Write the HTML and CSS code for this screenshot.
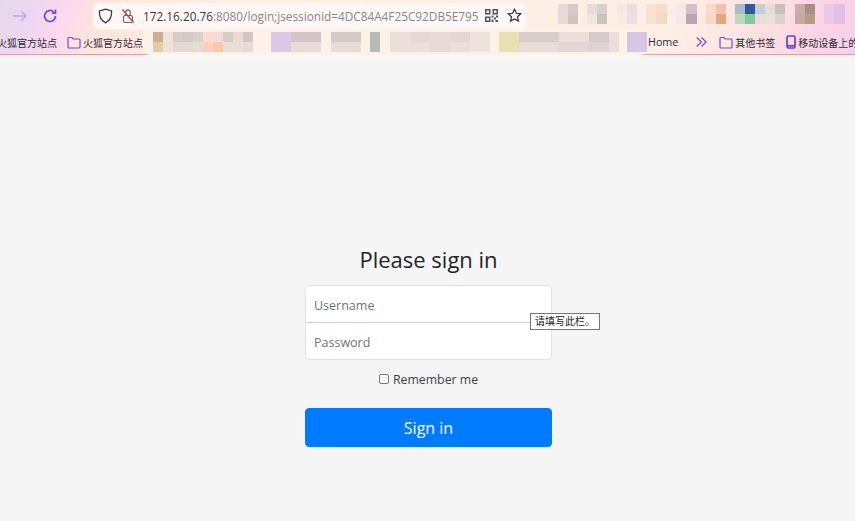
FILE: index.html
```html
<!DOCTYPE html>
<html lang="en">
<head>
    <meta charset="UTF-8">
    <meta name="viewport" content="width=device-width, initial-scale=1.0">
    <title>Please sign in</title>
    <link rel="stylesheet" href="styles.css">
</head>
<body>
    <header class="browser">
        <div class="toolbar">
            <svg class="icon nav-forward" width="18" height="18" viewBox="0 0 18 18" fill="none" stroke="#b9a2ee" stroke-width="1.3"><path d="M2 9h13M10 4l5 5-5 5"/></svg>
            <svg class="icon nav-reload" width="16" height="16" viewBox="0 0 16 16" fill="none" stroke="#7044dc" stroke-width="1.7"><path d="M13.5 8a5.5 5.5 0 1 1-1.7-4"/><path d="M13.5 1.5v3.7H9.8"/></svg>
            <div class="address">
                <svg class="icon" width="15" height="16" viewBox="0 0 15 16" fill="none" stroke="#3a3a44" stroke-width="1.3"><path d="M7.5 1.2 13.6 3c.3 5.500-1.700 9.500-6.100 11.800C3.100 12.500 1.100 8.500 1.400 3z"/></svg>
                <svg class="icon lock" width="14" height="16" viewBox="0 0 14 16" fill="none" stroke="#6a6570" stroke-width="1.200"><rect x="2.500" y="7.500" width="9" height="7" rx="1.500"/><path d="M4.800 7.500V4a2.200 2.200 0 0 1 4.400 0v3.500"/><path d="M1.500 1.500 12.500 14.500" stroke="#e0304a"/></svg>
                <span class="url"><b>172.16.20.76</b>:8080/login;jsessionid=4DC84A4F25C92DB5E795</span>
                <svg class="icon qr" width="13" height="13" viewBox="0 0 13 13" fill="#55505e"><path d="M0 0h5.500v5.500H0zM1.500 1.500V4H4V1.500zM7.500 0H13v5.500H7.500zM9 1.500V4h2.500V1.500zM0 7.500h5.500V13H0zM1.500 9v2.500H4V9zM6.500 6.500h2v2h-2zM9 8.500h2v2H9zM11 6.500h2v2h-2zM6.500 10.500h2V13h-2zM10.500 11h2.500v2h-2.500z"/></svg>
                <svg class="icon" width="15" height="15" viewBox="0 0 15 15" fill="none" stroke="#33303a" stroke-width="1.200"><path d="m7.500 1.300 1.900 4 4.300.5-3.200 3 .9 4.300-3.900-2.200-3.900 2.200.9-4.300-3.200-3 4.300-.5z"/></svg>
            </div>
        </div>
        <svg class="mosaic mosaic-top" width="287" height="21" viewBox="0 0 287 21">
            <rect x="0" y="0" width="10" height="10" fill="#e8d8d6"/><rect x="10" y="0" width="10" height="10" fill="#d9c8c8"/><rect x="0" y="10" width="10" height="10" fill="#e6dad4"/><rect x="10" y="10" width="10" height="10" fill="#cfc6c0"/>
            <rect x="29" y="0" width="10" height="10" fill="#e8dcd8"/><rect x="39" y="0" width="10" height="10" fill="#d9d0cc"/><rect x="29" y="10" width="10" height="10" fill="#f0e6dc"/><rect x="39" y="10" width="10" height="10" fill="#c9c3be"/>
            <rect x="59" y="0" width="10" height="10" fill="#f8e8e4"/><rect x="69" y="0" width="10" height="10" fill="#eedde0"/><rect x="59" y="10" width="10" height="10" fill="#f9ebe0"/><rect x="69" y="10" width="10" height="10" fill="#eedde2"/>
            <rect x="88" y="0" width="10" height="10" fill="#f8e2d4"/><rect x="98" y="0" width="11" height="10" fill="#fadcc4"/><rect x="88" y="10" width="10" height="10" fill="#f6e4d2"/><rect x="98" y="10" width="11" height="10" fill="#eedcc8"/>
            <rect x="118" y="0" width="10" height="10" fill="#f2e8e4"/><rect x="128" y="0" width="11" height="10" fill="#d3c0c4"/><rect x="118" y="10" width="10" height="10" fill="#f3e9e3"/><rect x="128" y="10" width="11" height="10" fill="#b9a6b4"/>
            <rect x="148" y="0" width="10" height="10" fill="#fbd9cc"/><rect x="158" y="0" width="10" height="10" fill="#f2c3a8"/><rect x="148" y="10" width="10" height="10" fill="#f6d8c6"/><rect x="158" y="10" width="10" height="10" fill="#e5a67a"/>
            <rect x="177" y="0" width="10" height="10" fill="#aab8d0"/><rect x="187" y="0" width="10" height="10" fill="#2d5b9a"/><rect x="197" y="0" width="10" height="10" fill="#c8cddd"/><rect x="207" y="0" width="10" height="10" fill="#e6dcd6"/><rect x="217" y="0" width="10" height="10" fill="#c9c0bc"/>
            <rect x="177" y="10" width="10" height="10" fill="#bcd8bf"/><rect x="187" y="10" width="10" height="10" fill="#86c79e"/><rect x="197" y="10" width="10" height="10" fill="#ecdcd8"/><rect x="207" y="10" width="10" height="10" fill="#ebe0d8"/><rect x="217" y="10" width="10" height="10" fill="#dcd4cc"/>
            <rect x="237" y="0" width="10" height="10" fill="#c9aca6"/><rect x="247" y="0" width="10" height="10" fill="#a58f88"/><rect x="237" y="10" width="10" height="10" fill="#c4aca0"/><rect x="247" y="10" width="10" height="10" fill="#b59d86"/>
            <rect x="266" y="0" width="10" height="20" fill="#ecc8e4"/><rect x="276" y="0" width="11" height="20" fill="#e2c0e6"/>
        </svg>
        <div class="bookmarks">
            <span class="bookmark first">火狐官方站点</span>
            <span class="bookmark"><svg class="icon" width="14" height="13" viewBox="0 0 14 13" fill="none" stroke="#6f4fd0" stroke-width="1.200"><path d="M1 2.500A1 1 0 0 1 2 1.500h3l1.300 1.500H12a1 1 0 0 1 1 1V11a1 1 0 0 1-1 1H2a1 1 0 0 1-1-1z"/></svg>火狐官方站点</span>
            <div class="blurred">
                <svg class="icon" width="497" height="20" viewBox="0 0 497 20">
                    <rect x="0" y="0" width="10" height="10" fill="#cfae98"/><rect x="0" y="10" width="10" height="10" fill="#e0cca8"/><rect x="10" y="0" width="10" height="20" fill="#f0e2d8"/><rect x="20" y="0" width="10" height="10" fill="#d9ccc8"/><rect x="20" y="10" width="10" height="10" fill="#e4d8d2"/><rect x="30" y="0" width="10" height="10" fill="#d4c8c8"/><rect x="30" y="10" width="10" height="10" fill="#e4d8d2"/><rect x="40" y="0" width="10" height="10" fill="#dad0cc"/><rect x="40" y="10" width="10" height="10" fill="#e6dcd4"/><rect x="50" y="0" width="10" height="10" fill="#fbdccb"/><rect x="50" y="10" width="10" height="10" fill="#fcd0c0"/><rect x="60" y="0" width="10" height="10" fill="#f4dcd8"/><rect x="60" y="10" width="10" height="10" fill="#fcc6ac"/><rect x="70" y="0" width="10" height="10" fill="#d8ccca"/><rect x="70" y="10" width="10" height="10" fill="#eadfd6"/><rect x="80" y="0" width="10" height="10" fill="#e8dcd4"/><rect x="80" y="10" width="10" height="10" fill="#eaded8"/><rect x="90" y="0" width="10" height="10" fill="#d2c6c2"/><rect x="90" y="10" width="10" height="10" fill="#e6dad2"/>
                    <rect x="118" y="0" width="20" height="20" fill="#ddc8e4"/><rect x="138" y="0" width="30" height="10" fill="#d4c4c8"/><rect x="138" y="10" width="30" height="10" fill="#e8dcd8"/><rect x="178" y="0" width="30" height="10" fill="#d6c8c8"/><rect x="178" y="10" width="30" height="10" fill="#e8dcd8"/><rect x="217" y="0" width="10" height="20" fill="#b8bab6"/>
                    <rect x="237" y="0" width="20" height="20" fill="#ecdfd8"/><rect x="257" y="0" width="20" height="10" fill="#e6d8d4"/><rect x="257" y="10" width="20" height="10" fill="#ecdfd8"/><rect x="277" y="0" width="20" height="20" fill="#e8dbd6"/><rect x="297" y="0" width="20" height="10" fill="#e4d6d2"/><rect x="297" y="10" width="20" height="10" fill="#ebdeda"/><rect x="317" y="0" width="20" height="20" fill="#eee2dc"/>
                    <rect x="346" y="0" width="20" height="20" fill="#e8e0b4"/><rect x="366" y="0" width="40" height="10" fill="#d9cccc"/><rect x="366" y="10" width="40" height="10" fill="#e8dcd8"/><rect x="406" y="0" width="30" height="10" fill="#ecdfd8"/><rect x="406" y="10" width="30" height="10" fill="#e4d6d4"/><rect x="436" y="0" width="20" height="10" fill="#d6cbcb"/><rect x="436" y="10" width="20" height="10" fill="#e0d2d2"/><rect x="456" y="0" width="10" height="20" fill="#ecdeda"/><rect x="474" y="0" width="20" height="20" fill="#d8c4e4"/>
                </svg>
            </div>
            <span class="bookmark home">Home</span>
            <svg class="icon more" width="11" height="12" viewBox="0 0 11 12" fill="none" stroke="#6f4fd0" stroke-width="1.300"><path d="m.8 1.500 4.500 4.500-4.500 4.500M5.500 1.500l4.500 4.500-4.500 4.500"/></svg>
            <span class="bookmark other"><svg class="icon" width="14" height="13" viewBox="0 0 14 13" fill="none" stroke="#6f4fd0" stroke-width="1.200"><path d="M1 2.500A1 1 0 0 1 2 1.500h3l1.300 1.500H12a1 1 0 0 1 1 1V11a1 1 0 0 1-1 1H2a1 1 0 0 1-1-1z"/></svg>其他书签</span>
            <span class="bookmark mobile"><svg class="icon" width="10" height="14" viewBox="0 0 10 14" fill="none" stroke="#6a3fd0" stroke-width="1.700"><rect x="1" y="1" width="8" height="12" rx="1.500"/><path d="M1 10.800h8"/></svg>移动设备上的</span>
        </div>
    </header>

    <main class="page">
        <form class="form-signin">
            <h2 class="form-signin-heading">Please sign in</h2>
            <div class="field-stack">
                <input class="form-control top" type="text" placeholder="Username">
                <input class="form-control" type="password" placeholder="Password">
                <div class="validation-tip">请填写此栏。</div>
            </div>
            <label class="remember"><input class="remember-box" type="checkbox">Remember me</label>
            <button class="btn-primary" type="button">Sign in</button>
        </form>
    </main>
</body>
</html>
```

FILE: styles.css
```css
* {
    box-sizing: border-box;
}
body {
    margin: 0;
    height: 521px;
    overflow: hidden;
    background-color: #f5f5f5;
    color: #212529;
    font-family: "Open Sans", "Noto Sans CJK SC", sans-serif;
}
.icon {
    display: block;
    flex: none;
}

/* browser chrome */
.browser {
    position: relative;
    height: 55px;
    border-bottom: 1px solid #dca0a4;
    background:
        linear-gradient(110deg, #e6d8ea 0, #ecd8f0 35px, #fdd8ee 65px, #ffe6dc 100px, #fff0e6 250px, #ffeee4 640px, #fde2e2 720px, #fbd2e6 790px, #ecd2f0 855px);
}
.toolbar {
    display: flex;
    align-items: center;
    height: 30px;
    padding: 1px 0 0 11px;
}
.nav-forward {
    margin-right: 13px;
}
.nav-reload {
    margin-right: 35px;
}
.address {
    display: flex;
    flex: none;
    align-items: center;
    width: 434px;
    height: 26px;
    padding: 0 5px;
    border-radius: 6px;
    background-color: #fff8f6;
}
.lock {
    margin-left: 8px;
}
.url {
    flex: none;
    width: 341px;
    margin-left: 8px;
    white-space: nowrap;
    font-size: 11.8px;
    color: #8a8490;
}
.url b {
    font-weight: 400;
    color: #3c3844;
}
.qr {
    margin-left: 1px;
}
.qr + .icon {
    margin-left: 9px;
}
.mosaic-top {
    position: absolute;
    top: 4px;
    left: 558px;
}
.bookmarks {
    display: flex;
    align-items: center;
    height: 24px;
    font-size: 10px;
    color: #2c2a34;
}
.bookmark {
    display: flex;
    flex: none;
    align-items: center;
    gap: 2px;
    white-space: nowrap;
}
.first {
    width: 70px;
    margin-left: -3px;
}
.bookmarks > .bookmark:nth-child(2) {
    width: 76px;
}
.blurred {
    display: flex;
    flex: none;
    align-items: center;
    width: 505px;
    height: 26px;
    padding-left: 10px;
    border-radius: 0 0 14px 14px;
    background-color: #fdf1e8;
    box-shadow: 0 3px 3px rgba(250, 248, 246, 0.9);
}
.home {
    font-family: "Open Sans", sans-serif;
    font-size: 10.7px;
}
.more {
    margin-left: 18px;
}
.other {
    margin-left: 12px;
}
.mobile {
    margin-left: 11px;
}

/* sign in form */
.page {
    display: flex;
    justify-content: center;
    padding: 189px 0 0 2px;
}
.form-signin {
    width: 247px;
}
.form-signin-heading {
    margin: 0 0 8px;
    height: 33px;
    line-height: 31px;
    text-align: center;
    font-size: 22px;
    font-weight: 400;
}
.field-stack {
    position: relative;
}
.form-control {
    display: block;
    width: 100%;
    height: 38px;
    padding: 2px 8px 0;
    border: 1px solid #e0e3e6;
    border-top-color: #ced4da;
    border-radius: 0 0 4px 4px;
    background-color: #fff;
    font-family: inherit;
    font-size: 12.5px;
}
.form-control.top {
    margin-bottom: -1px;
    border-color: #e0e3e6;
    border-radius: 4px 4px 0 0;
}
.form-control::placeholder {
    color: #6c757d;
    opacity: 1;
}
.validation-tip {
    position: absolute;
    top: 28px;
    left: 225px;
    width: 70px;
    height: 17px;
    padding-left: 4px;
    border: 1px solid #767676;
    background-color: #fff;
    font-size: 10px;
    line-height: 15px;
    white-space: nowrap;
    color: #222;
}
.remember {
    display: flex;
    align-items: center;
    justify-content: center;
    gap: 4px;
    height: 38px;
    margin-bottom: 10px;
    font-size: 12.3px;
    color: #3b3f45;
}
.remember-box {
    appearance: none;
    width: 10px;
    height: 10px;
    margin: 0;
    border: 1px solid #77757c;
    border-radius: 2px;
    background-color: #fff;
}
.btn-primary {
    display: block;
    width: 100%;
    height: 39px;
    border: 1px solid #007bff;
    border-radius: 4px;
    background-color: #007bff;
    color: #fff;
    font-family: inherit;
    font-size: 16px;
}
```
